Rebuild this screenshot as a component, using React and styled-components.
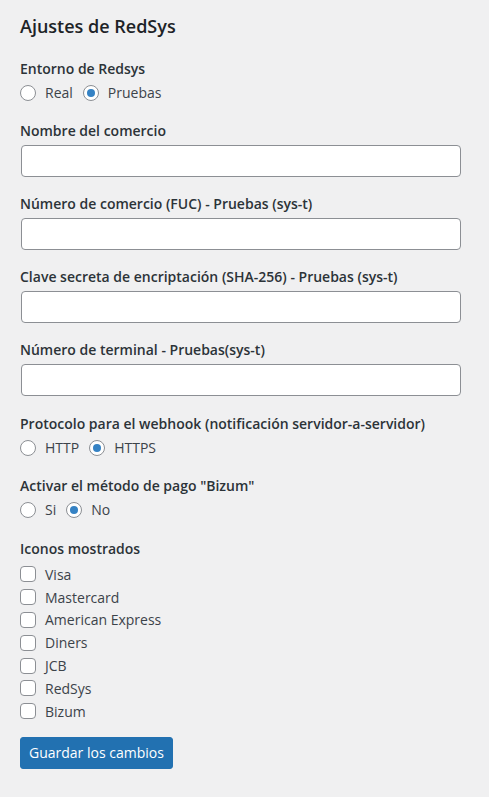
import React from "react"
import styled, { createGlobalStyle } from "styled-components"

const GlobalStyle = createGlobalStyle`
  html, body {
    margin: 0;
    padding: 0;
    background: #f0f0f1;
  }
  body {
    font-family: "Open Sans", "Noto Sans", sans-serif;
    font-size: 14px;
    color: #1d2327;
  }
`

const Page = styled.form`
  padding: 13px 20px 28px 20px;
  display: flex;
  flex-direction: column;
`

const Title = styled.h2`
  font-size: 18px;
  font-weight: 600;
  line-height: 26px;
  margin: 0 0 20px 0;
  color: #1d2327;
`

const Field = styled.div`
  display: flex;
  flex-direction: column;
  margin-bottom: ${props => props.$space || "17px"};
`

const Label = styled.div`
  font-weight: 600;
  line-height: 20px;
  color: #2c3338;
  margin-bottom: ${props => props.$gap || "4px"};
`

const TextInput = styled.input`
  box-sizing: border-box;
  width: 440px;
  height: 32px;
  margin-left: 1px;
  border: 1px solid #8c8f94;
  border-radius: 4px;
  background: #fff;
  padding: 0 8px;
  font: inherit;
`

const OptionRow = styled.div`
  display: flex;
  align-items: center;
  gap: 10px;
  height: 22px;
`

const Option = styled.label`
  display: flex;
  align-items: center;
  gap: 9px;
  color: #3c434a;
  line-height: 20px;
`

const Radio = styled.span`
  box-sizing: border-box;
  width: 16px;
  height: 16px;
  border-radius: 50%;
  border: 1px solid #8c8f94;
  background: #fff;
  display: flex;
  align-items: center;
  justify-content: center;
  &::after {
    content: "";
    display: ${props => (props.$checked ? "block" : "none")};
    width: 8px;
    height: 8px;
    border-radius: 50%;
    background: #3582c4;
  }
`

const CheckList = styled.div`
  display: flex;
  flex-direction: column;
`

const CheckRow = styled.label`
  display: flex;
  align-items: center;
  gap: 9px;
  height: 22.8px;
  color: #3c434a;
`

const Box = styled.span`
  box-sizing: border-box;
  width: 16px;
  height: 16px;
  border-radius: 4px;
  border: 1px solid #8c8f94;
  background: #fff;
`

const SaveButton = styled.button`
  align-self: flex-start;
  margin-top: 14px;
  height: 32px;
  padding: 0 8px;
  border: 1px solid #2271b1;
  border-radius: 3px;
  background: #2271b1;
  color: #fff;
  font: inherit;
`

const textFields = [
  "Nombre del comercio",
  "Número de comercio (FUC) - Pruebas (sys-t)",
  "Clave secreta de encriptación (SHA-256) - Pruebas (sys-t)",
  "Número de terminal - Pruebas(sys-t)",
]

const icons = ["Visa", "Mastercard", "American Express", "Diners", "JCB", "RedSys", "Bizum"]

const RadioGroup = ({ label, options, checked, space }) => (
  <Field $space={space}>
    <Label $gap="3px">{label}</Label>
    <OptionRow>
      {options.map(opt => (
        <Option key={opt}>
          <Radio $checked={opt === checked} />
          {opt}
        </Option>
      ))}
    </OptionRow>
  </Field>
)

const App = () => {
  return (
    <>
      <GlobalStyle />
      <Page>
        <Title>Ajustes de RedSys</Title>
        <RadioGroup label="Entorno de Redsys" options={["Real", "Pruebas"]} checked="Pruebas" />
        {textFields.map((f, i) => (
          <Field key={f} $space={i === textFields.length - 1 ? "18px" : "17px"}>
            <Label>{f}</Label>
            <TextInput type="text" />
          </Field>
        ))}
        <RadioGroup
          label="Protocolo para el webhook (notificación servidor-a-servidor)"
          options={["HTTP", "HTTPS"]}
          checked="HTTPS"
        />
        <RadioGroup
          label={'Activar el método de pago "Bizum"'}
          options={["Si", "No"]}
          checked="No"
          space="18px"
        />
        <Field $space="0">
          <Label $gap="4px">Iconos mostrados</Label>
          <CheckList>
            {icons.map(i => (
              <CheckRow key={i}>
                <Box />
                {i}
              </CheckRow>
            ))}
          </CheckList>
        </Field>
        <SaveButton type="button">Guardar los cambios</SaveButton>
      </Page>
    </>
  )
}

export default App
